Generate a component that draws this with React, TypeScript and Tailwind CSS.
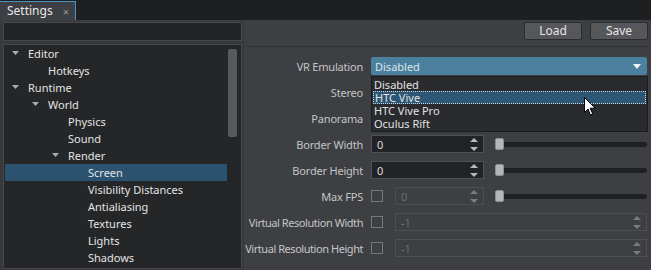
import React from 'react';

type Node = { label: string; level: number; open?: boolean; selected?: boolean };

const tree: Node[] = [
  { label: 'Editor', level: 0, open: true },
  { label: 'Hotkeys', level: 1 },
  { label: 'Runtime', level: 0, open: true },
  { label: 'World', level: 1, open: true },
  { label: 'Physics', level: 2 },
  { label: 'Sound', level: 2 },
  { label: 'Render', level: 2, open: true },
  { label: 'Screen', level: 3, selected: true },
  { label: 'Visibility Distances', level: 3 },
  { label: 'Antialiasing', level: 3 },
  { label: 'Textures', level: 3 },
  { label: 'Lights', level: 3 },
  { label: 'Shadows', level: 3 },
];

const indent = ['pl-[23px]', 'pl-[43px]', 'pl-[63px]', 'pl-[83px]'];
const arrowPos = ['left-[7px]', 'left-[27px]', 'left-[47px]', 'left-[67px]'];

const Caret = () => (
  <svg width="7" height="4" viewBox="0 0 7 4">
    <path d="M0 0h7L3.5 4z" fill="#a9abae" />
  </svg>
);

const SpinArrows = ({ dim }: { dim?: boolean }) => (
  <div className="flex flex-col items-center gap-[5px] pr-[5px]">
    <svg width="8" height="4" viewBox="0 0 8 4">
      <path d="M0 4h8L4 0z" fill={dim ? '#7a7c80' : '#b7b9bc'} />
    </svg>
    <svg width="8" height="4" viewBox="0 0 8 4">
      <path d="M0 0h8L4 4z" fill={dim ? '#7a7c80' : '#b7b9bc'} />
    </svg>
  </div>
);

const Spin = ({ value, disabled, wide }: { value: string; disabled?: boolean; wide?: boolean }) => (
  <div
    className={`h-[18px] flex items-center justify-between border ${
      wide ? 'flex-1' : 'w-[113px]'
    } ${disabled ? 'bg-[#3d3f43] border-[#4d4f53] text-[#6c6e72]' : 'bg-[#222326] border-[#4f5155] text-[#dcdcdc]'}`}
  >
    <span className="pl-[5px]">{value}</span>
    <SpinArrows dim={disabled} />
  </div>
);

const Slider = () => (
  <div className="flex-1 relative h-[18px] flex items-center ml-[11px]">
    <div className="h-[5px] w-full bg-[#1f2022] rounded-full" />
    <div className="absolute left-0 top-[3px] w-[9px] h-[12px] rounded-[2px] bg-[#b4b5b7] border border-[#8d8e90]" />
  </div>
);

const Check = () => <div className="w-[12px] h-[12px] border border-[#76787c] mr-[12px] shrink-0" />;

const Row = ({ label, tight, children }: { label: string; tight?: boolean; children: React.ReactNode }) => (
  <div className="flex items-center h-[18px]">
    <div
      className={`w-[127px] shrink-0 text-right pr-[8px] text-[#c4c5c7] whitespace-nowrap ${
        tight ? 'tracking-[-0.45px]' : 'tracking-[-0.2px]'
      }`}
    >
      {label}
    </div>
    <div className="flex-1 flex items-center">{children}</div>
  </div>
);

export default function App() {
  return (
    <div
      className="w-[651px] h-[270px] bg-[#1e1f21] flex flex-col text-[11px] leading-none overflow-hidden"
      style={{ fontFamily: '"Noto Sans", "Open Sans", sans-serif' }}
    >
      <div className="h-[20px] flex items-end">
        <div className="w-[76px] h-[19px] bg-[#3c3f43] border-t border-r border-[#4c93c2] flex items-center justify-between pl-[7px] pr-[6px] text-[#e8e8e8] text-[12px]">
          <span>Settings</span>
          <span className="text-[#9c9ea1] text-[11px]">×</span>
        </div>
      </div>
      <div className="flex-1 flex border-t border-[#3c3f43] min-h-0">
        <div className="w-[244px] bg-[#38393c] flex flex-col gap-[3px] pl-[3px] pr-[2px] pt-[1px] pb-[1px]">
          <div className="h-[19px] bg-[#232427] border border-[#45474a]" />
          <div className="flex-1 bg-[#252628] border border-[#45474a] relative">
            {tree.map((n) => (
              <div
                key={n.label}
                className={`relative h-[17px] flex items-center text-[#e4e4e4] w-[222px] ml-[1px] ${indent[n.level]} ${
                  n.selected ? 'bg-[#2b536f]' : ''
                }`}
              >
                {n.open && (
                  <span className={`absolute top-[6px] ${arrowPos[n.level]}`}>
                    <Caret />
                  </span>
                )}
                {n.label}
              </div>
            ))}
            <div className="absolute right-[4px] top-[4px] w-[9px] h-[88px] rounded-[2px] bg-[#58595c]" />
          </div>
        </div>
        <div className="flex-1 bg-[#3d3f43] flex flex-col relative">
          <div className="flex justify-end gap-[8px] pt-[1px] pr-[3px]">
            <button className="w-[58px] h-[18px] bg-[#55575a] border border-[#2b2c2e] rounded-[2px] text-[#e6e6e6] text-[12px]">Load</button>
            <button className="w-[58px] h-[18px] bg-[#55575a] border border-[#2b2c2e] rounded-[2px] text-[#e6e6e6] text-[12px]">Save</button>
          </div>
          <div className="mt-[6px] ml-[3px] mr-[3px] border-t border-[#2e3033]" />
          <div className="flex flex-col gap-[8px] mt-[10px] pr-[4px]">
            <Row label="VR Emulation">
              <div className="flex-1 h-[18px] bg-[#4b809e] rounded-[2px] flex items-center justify-between pl-[4px] pr-[6px] text-[#dbe5ea]">
                <span>Disabled</span>
                <svg width="8" height="5" viewBox="0 0 8 5">
                  <path d="M0 0h8L4 5z" fill="#eef3f6" />
                </svg>
              </div>
            </Row>
            <Row label="Stereo">
              <Check />
            </Row>
            <Row label="Panorama">
              <Check />
            </Row>
            <Row label="Border Width">
              <Spin value="0" />
              <Slider />
            </Row>
            <Row label="Border Height">
              <Spin value="0" />
              <Slider />
            </Row>
            <Row label="Max FPS">
              <Check />
              <div className="w-[89px] flex">
                <Spin value="0" disabled wide />
              </div>
              <Slider />
            </Row>
            <Row label="Virtual Resolution Width" tight>
              <Check />
              <Spin value="-1" disabled wide />
            </Row>
            <Row label="Virtual Resolution Height" tight>
              <Check />
              <Spin value="-1" disabled wide />
            </Row>
          </div>
          <div className="absolute left-[127px] top-[55px] w-[277px] bg-[#2a2b2e] border border-[#1b1c1e] text-[#e2e2e2] py-[1px]">
            <div className="h-[13px] flex items-center pl-[2px]">Disabled</div>
            <div className="h-[13px] flex items-center pl-[2px] bg-[#2d5674] outline-1 outline-dotted outline-[#c9d3da] -outline-offset-1 mx-[1px]">HTC Vive</div>
            <div className="h-[13px] flex items-center pl-[2px]">HTC Vive Pro</div>
            <div className="h-[13px] flex items-center pl-[2px]">Oculus Rift</div>
          </div>
          <svg className="absolute left-[340px] top-[76px]" width="12" height="19" viewBox="0 0 12 19">
            <path d="M0.5 0.5v15l3.5-3.5 2.5 6 2.2-1-2.5-5.8h5z" fill="#fff" stroke="#000" strokeWidth="1" />
          </svg>
        </div>
      </div>
    </div>
  );
}
